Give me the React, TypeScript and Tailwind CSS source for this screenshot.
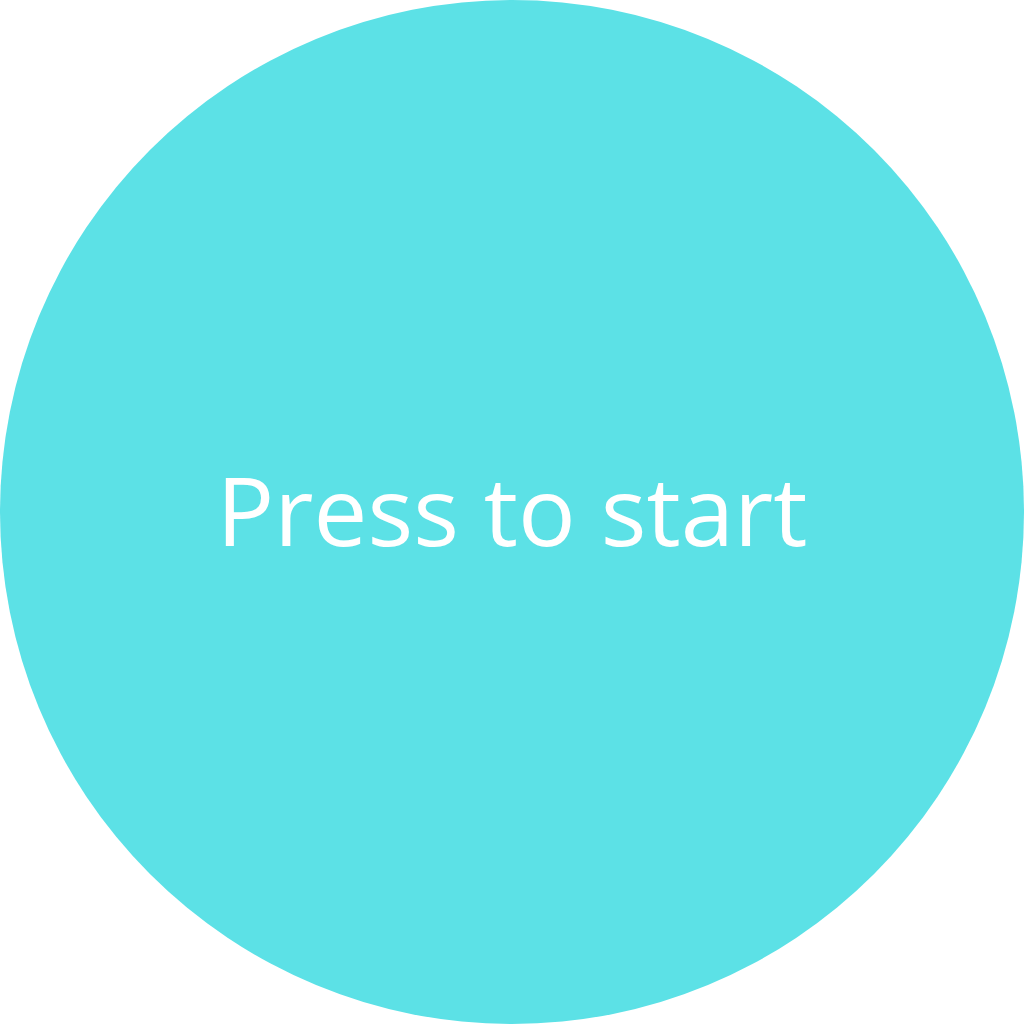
export default function App() {
  return (
    <main className="w-[1024px] h-[1024px] bg-white">
      <button className="w-[1024px] h-[1024px] rounded-full bg-[#5ce1e6] flex items-center justify-center">
        <span className="text-white text-[96px] leading-none font-normal pb-[6px]" style={{ fontFamily: '"Open Sans", sans-serif' }}>
          Press to start
        </span>
      </button>
    </main>
  )
}
